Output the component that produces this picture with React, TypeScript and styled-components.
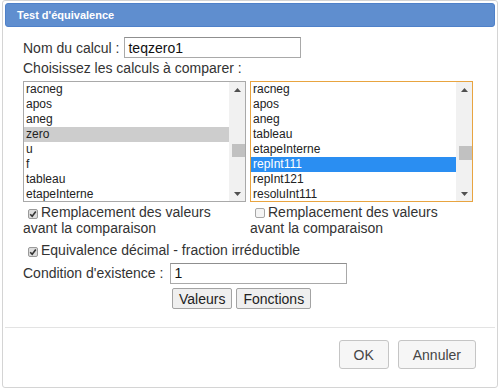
import styled, { createGlobalStyle } from "styled-components";

const GlobalStyle = createGlobalStyle`
  body {
    margin: 0;
    background: #ffffff;
    font-family: "Liberation Sans", Arial, sans-serif;
  }
`;

interface ListProps {
  items: string[];
  selected: number;
  focused: boolean;
  thumbTop: number;
  thumbHeight: number;
}

function ListBox(props: ListProps) {
  return (
    <List focused={props.focused}>
      <Items>
        {props.items.map((item, i) => (
          <Item
            key={item}
            state={i === props.selected ? (props.focused ? "active" : "inactive") : "none"}
          >
            {item}
          </Item>
        ))}
      </Items>
      <Scrollbar>
        <Arrow>
          <svg width="7" height="4" viewBox="0 0 7 4">
            <path d="M0 4 L3.5 0 L7 4 Z" fill="#505050" />
          </svg>
        </Arrow>
        <Track>
          <Thumb top={props.thumbTop} size={props.thumbHeight} />
        </Track>
        <Arrow>
          <svg width="7" height="4" viewBox="0 0 7 4">
            <path d="M0 0 L3.5 4 L7 0 Z" fill="#505050" />
          </svg>
        </Arrow>
      </Scrollbar>
    </List>
  );
}

function Check(props: { checked: boolean }) {
  return (
    <Box checked={props.checked}>
      {props.checked && (
        <svg width="8" height="8" viewBox="0 0 8 8">
          <path d="M1.2 4.2 L3.2 6.2 L6.8 1.6" stroke="#333" strokeWidth="1.6" fill="none" />
        </svg>
      )}
    </Box>
  );
}

export default function App() {
  return (
    <>
      <GlobalStyle />
      <Dialog>
        <TitleBar>Test d'équivalence</TitleBar>
        <Content>
          <FieldRow>
            Nom du calcul :<TextInput width={177} gap={5} defaultValue="teqzero1" />
          </FieldRow>
          <Line>Choisissez les calculs à comparer :</Line>
          <Lists>
            <ListBox
              items={["racneg", "apos", "aneg", "zero", "u", "f", "tableau", "etapeInterne"]}
              selected={3}
              focused={false}
              thumbTop={47}
              thumbHeight={13}
            />
            <ListBox
              items={[
                "racneg",
                "apos",
                "aneg",
                "tableau",
                "etapeInterne",
                "repInt111",
                "repInt121",
                "resoluInt111",
              ]}
              selected={5}
              focused={true}
              thumbTop={49}
              thumbHeight={14}
            />
          </Lists>
          <Options>
            <Option>
              <Check checked={true} />
              Remplacement des valeurs avant la comparaison
            </Option>
            <Option>
              <Check checked={false} />
              Remplacement des valeurs avant la comparaison
            </Option>
          </Options>
          <Equivalence>
            <Check checked={true} />
            Equivalence décimal - fraction irréductible
          </Equivalence>
          <ConditionRow>
            Condition d'existence :<TextInput width={177} gap={7} defaultValue="1" />
          </ConditionRow>
          <SmallButtons>
            <SmallButton>Valeurs</SmallButton>
            <SmallButton>Fonctions</SmallButton>
          </SmallButtons>
        </Content>
        <ButtonPane>
          <PaneButton>OK</PaneButton>
          <PaneButton>Annuler</PaneButton>
        </ButtonPane>
      </Dialog>
    </>
  );
}

const Dialog = styled.div`
  box-sizing: border-box;
  margin-left: 2px;
  width: 496px;
  height: 388px;
  border: 1px solid #d4d4d4;
  border-radius: 3px;
  padding: 2px;
  display: flex;
  flex-direction: column;
  color: #333333;
`;

const TitleBar = styled.div`
  box-sizing: border-box;
  height: 24px;
  background: #5f8ecf;
  border: 1px solid #4f81c9;
  border-radius: 3px;
  color: #ffffff;
  font-weight: 700;
  font-size: 11px;
  padding: 0 11px;
  display: flex;
  align-items: center;
`;

const Content = styled.div`
  padding: 0 18px;
  font-size: 14px;
`;

const FieldRow = styled.div`
  margin-top: 10px;
  display: flex;
  align-items: center;
  height: 21px;
`;

const TextInput = styled.input<{ width: number; gap: number }>`
  box-sizing: border-box;
  width: ${(p) => p.width}px;
  height: 21px;
  margin: 0 0 0 ${(p) => p.gap}px;
  border: 1px solid #a9a9a9;
  border-top-color: #8f8f8f;
  padding: 0 3px;
  font-family: "Liberation Sans", Arial, sans-serif;
  font-size: 14px;
  color: #111;
  outline: none;
`;

const Line = styled.div`
  margin-top: 2px;
  line-height: 16px;
`;

const Lists = styled.div`
  margin-top: 5px;
  display: flex;
  gap: 4px;
`;

const List = styled.div<{ focused: boolean }>`
  box-sizing: border-box;
  width: 223px;
  height: 121px;
  border: 1px solid ${(p) => (p.focused ? "#e8a440" : "#a9a9a9")};
  display: flex;
  background: #fff;
`;

const Items = styled.div`
  flex: 1;
  overflow: hidden;
`;

const Item = styled.div<{ state: "none" | "active" | "inactive" }>`
  height: 15px;
  line-height: 15px;
  font-size: 12px;
  padding-left: 2px;
  white-space: nowrap;
  color: ${(p) => (p.state === "active" ? "#ffffff" : "#222222")};
  background: ${(p) =>
    p.state === "active" ? "#2a8ef2" : p.state === "inactive" ? "#cdcdcd" : "transparent"};
`;

const Scrollbar = styled.div`
  width: 16px;
  background: #f1f1f1;
  display: flex;
  flex-direction: column;
`;

const Arrow = styled.div`
  height: 15px;
  display: flex;
  align-items: center;
  justify-content: center;
  padding-left: 1px;
`;

const Track = styled.div`
  flex: 1;
`;

const Thumb = styled.div<{ top: number; size: number }>`
  margin: ${(p) => p.top}px 0 0 3px;
  height: ${(p) => p.size}px;
  background: #c1c1c1;
`;

const Options = styled.div`
  margin-top: 2px;
  display: flex;
  gap: 4px;
`;

const Option = styled.div`
  width: 223px;
  line-height: 16px;
`;

const Box = styled.span<{ checked: boolean }>`
  box-sizing: border-box;
  display: inline-flex;
  align-items: center;
  justify-content: center;
  width: 10px;
  height: 10px;
  margin: 0 3px 0 5px;
  vertical-align: -1px;
  border: 1px solid ${(p) => (p.checked ? "#9a9a9a" : "#a6a6a6")};
  border-radius: 2px;
  background: ${(p) => (p.checked ? "#dcdcdc" : "#f4f4f4")};
`;

const Equivalence = styled.div`
  margin-top: 6px;
  line-height: 16px;
`;

const ConditionRow = styled.div`
  margin-top: 4px;
  display: flex;
  align-items: center;
  height: 22px;
`;

const SmallButtons = styled.div`
  margin-top: 4px;
  padding-left: 149px;
  display: flex;
  gap: 4px;
`;

const SmallButton = styled.button`
  box-sizing: border-box;
  height: 21px;
  padding: 0 6px;
  background: #efefef;
  border: 1px solid #a3a3a3;
  border-radius: 2px;
  font-family: "Liberation Sans", Arial, sans-serif;
  font-size: 14px;
  color: #222;
`;

const ButtonPane = styled.div`
  margin-top: 18px;
  border-top: 1px solid #e3e3e3;
  padding: 12px 19px 0 0;
  display: flex;
  justify-content: flex-end;
  gap: 9px;
`;

const PaneButton = styled.button`
  box-sizing: border-box;
  height: 29px;
  padding: 0 14px;
  background: #f6f6f6;
  border: 1px solid #c5c5c5;
  border-radius: 3px;
  font-family: "Liberation Sans", Arial, sans-serif;
  font-size: 14px;
  color: #454545;
`;
